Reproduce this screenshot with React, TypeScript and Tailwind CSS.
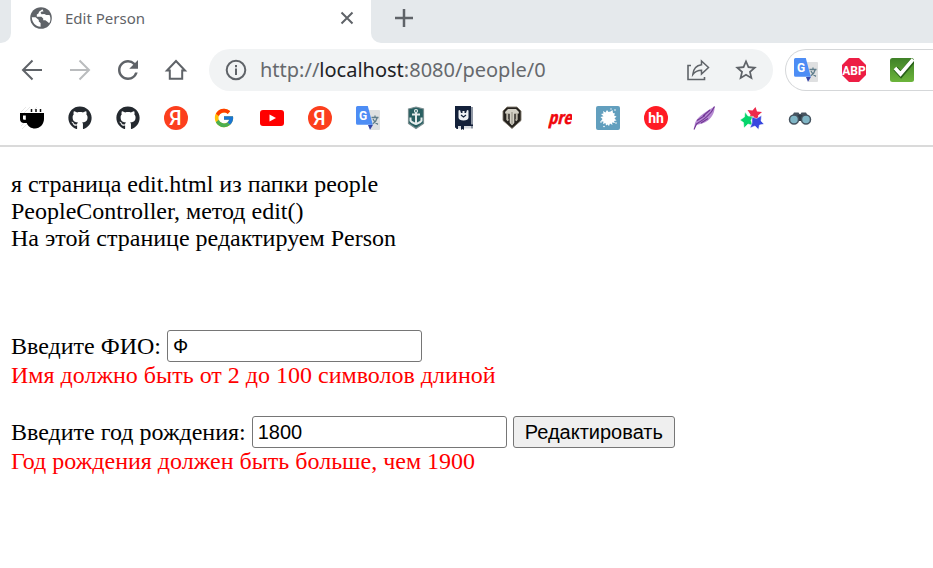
import type { ReactNode } from "react";
import { FaGithub } from "react-icons/fa";
import { FcGoogle } from "react-icons/fc";
import { MdRefresh, MdStarBorder } from "react-icons/md";

type IconProps = { children: ReactNode };

function Icon({ children }: IconProps) {
  return (
    <svg viewBox="0 0 24 24" className="size-6 shrink-0" fill="none" aria-hidden="true">
      {children}
    </svg>
  );
}

const sans = "font-['Noto_Sans',sans-serif]";
const roboto = "font-['Roboto',sans-serif]";

function Globe() {
  return (
    <Icon>
      <circle cx="12" cy="12" r="10.8" fill="#5f6368" />
      <path
        d="M13.5 3.2 10.3 5.6c-.6.5-.3 1.5-1.2 2.2l-1.3.8v2.2h4.6l1.8 1.6v1.9h2.2l2 1.4 1.8 1.6c1.7-2.6 1.6-5.6.3-8.2h-3.2l-2-1.2-2.7.3-1.1-1.4 1.2-1.2h1.8z"
        fill="#fff"
      />
      <path d="M2.8 11.2h3.8l3.2 2.8v1.5l1.8 1.4v3.9c-4.9-.3-8.6-4.3-8.8-9.6Z" fill="#fff" />
    </Icon>
  );
}

function Yandex() {
  return (
    <Icon>
      <circle cx="12" cy="12" r="12" fill="#fc3f1d" />
      <text x="11.5" y="19" textAnchor="middle" fontSize="20" fontWeight="500" fill="#fff" className={roboto}>
        Я
      </text>
    </Icon>
  );
}

function Translate() {
  return (
    <Icon>
      <path d="M9 4h14a1 1 0 0 1 1 1v18a1 1 0 0 1-1 1h-8Z" fill="#dfe0e1" />
      <path d="m12 19 5-.2L14 24Z" fill="#3646a8" />
      <path d="M1.5 0h10.3l5 18.8H1.5A1.5 1.5 0 0 1 0 17.3V1.5A1.5 1.5 0 0 1 1.5 0Z" fill="#4d8df5" />
      <path d="M15.5 11.5h7M19 9.500v2M21.300 11.500c-.7 3-2.500 5-4.500 6.300M17 13c1 2.500 2.800 4.300 5 5.300" stroke="#607d8b" strokeWidth="1.3" />
      <text x="7" y="14" textAnchor="middle" fontSize="12" fontWeight="700" fill="#fff" className={roboto}>
        G
      </text>
    </Icon>
  );
}

function Coffee() {
  return (
    <Icon>
      <path d="m1 6 5-5M1 10l9-9M2 23l5-5M14 4l3-3M1 20l3-3" stroke="#ddd" strokeWidth=".7" />
      <path d="M11.500 3v3M16 3v3M20.500 3v3" stroke="#111" strokeWidth="1.5" />
      <path d="M0 7h24v6c0 5-4 9.500-9 9.500-4 0-7-2.200-8.300-5.500H4C1.500 17 0 15.500 0 13Z" fill="#000" />
      <path d="M3 9.500h2.800v4.300H4.200c-.8 0-1.200-.5-1.200-1.300Z" fill="#fff" />
    </Icon>
  );
}

function YouTube() {
  return (
    <Icon>
      <rect y="4" width="24" height="16" rx="3" fill="#f00" />
      <path d="m9.500 8.500 6.500 3.500-6.500 3.500Z" fill="#fff" />
    </Icon>
  );
}

function Warships() {
  return (
    <Icon>
      <path d="M4.500 3 12 1l7.500 2v14.500L12 22.500 4.500 17.500Z" fill="#285f61" stroke="#7b8f91" strokeWidth="1.2" />
      <circle cx="12" cy="5" r="1.5" stroke="#e5ecec" strokeWidth="1.2" />
      <path d="M12 6.500V18M8 8.500h8M6.500 11.500v3.300c1 1.800 3 2.200 5.500 3.200 2.500-1 4.500-1.400 5.500-3.200v-3.300" stroke="#e5ecec" strokeWidth="2" />
    </Icon>
  );
}

function Book() {
  return (
    <Icon>
      <path d="M3 0h16v19H6v4H5l-2-2Z" fill="#14213a" />
      <path d="M19 1h2v21.500h-2Z" fill="#8f97a4" />
      <path d="M6 20h13v2.500H6Z" fill="#d5d9df" />
      <path d="M3 18.500h18V20H6v3H5l-2-2Z" fill="#14213a" />
      <path d="M9 20h3v4l-1.500-1L9 24Z" fill="#14213a" />
      <path d="M6.500 4.500 8 4l1 3h1.500V5h2v2H14l1-3 1.500.5v7c0 2-2 3-5 3s-5-1-5-3Z" fill="#eef1f4" />
      <path d="m9 9 2.500 2L14 9" stroke="#14213a" strokeWidth="1.2" />
    </Icon>
  );
}

function Tanks() {
  return (
    <Icon>
      <path d="M7 1h10l4 4v9.500L12 22.500 3 14.500V5Z" fill="#25221e" stroke="#817b6e" strokeWidth=".9" />
      <path d="M8 3h8l3 3-.5 1.800h-4.200V17L12 19.500 9.700 17V7.800H5.500L5 6Z" fill="#d3d0c5" />
      <path d="M7.300 7v6.500l1 1.200M16.700 7v6.500l-1 1.200" stroke="#bcb7aa" strokeWidth="2" />
      <path d="M12 6v12" stroke="#817b6e" strokeWidth=".8" />
    </Icon>
  );
}

function Pre() {
  return (
    <Icon>
      <text
        x="12"
        y="18"
        textAnchor="middle"
        fontSize="18"
        fontWeight="700"
        fontStyle="italic"
        fill="#f0060c"
        stroke="#f0060c"
        strokeWidth=".4"
        className="font-['Open_Sans_Condensed','Roboto_Condensed','Lato',sans-serif]"
      >
        pre
      </text>
    </Icon>
  );
}

function Splash() {
  return (
    <Icon>
      <rect width="24" height="24" rx="2" fill="#629fbe" />
      <path
        d="m7 5 2.500 1.500L11 4l1.500 2 2-.5L16.500 4l.5 3 2 .5-1 2 2.500 1-2 2 2 2-2.500.5L19 17l-3-.5.500 2.500-2.500-1.500-1 2.500-1.500-1.500L10 19.500 9.500 17 7 18l.5-2.500-3 0L6.500 13 4.500 11l3-.7L5 8l2.500-.5Z"
        fill="#fff"
      />
      <g fill="#fff">
        <circle cx="8" cy="20.500" r=".8" />
        <circle cx="19" cy="4" r=".8" />
        <circle cx="15" cy="3" r=".7" />
        <circle cx="5" cy="16" r=".8" />
        <circle cx="20" cy="17" r=".8" />
      </g>
    </Icon>
  );
}

function HeadHunter() {
  return (
    <Icon>
      <circle cx="12" cy="12" r="12" fill="#ff1c24" />
      <text x="12" y="17" textAnchor="middle" fontSize="14" fontWeight="700" fill="#fff" className={roboto}>
        hh
      </text>
    </Icon>
  );
}

function Feather() {
  return (
    <Icon>
      <path d="M22.500.5c.5 5-2 10.500-6.500 14-3.500 2.800-8 3.500-11.500 4.500L2 23l1-6C5.500 10.500 15 5 22.500.5Z" fill="#b68ad2" />
      <path d="M22.500.5C19 9 11 14 4.500 18L2 23.500M5 14.500l8-5M9 17l7-4.500M18 4l-7 6" stroke="#713794" strokeWidth="1.1" />
    </Icon>
  );
}

function Stars() {
  return (
    <Icon>
      <path d="m7.500 4 5 .5 3-3.500 1.500 4.500 5 .5-4 3.500.5 5-4.500-2.500L9 13l1.500-4.500Z" fill="#ed294a" />
      <path d="m5 6 3 4 5.500.5-2.500 4 2 5-5-1.500L4 22l-.5-5.500L0 14l4.500-3Z" fill="#06d56b" stroke="#fff" strokeWidth=".5" />
      <path d="m12 11 4.500 1.500 5-3-.5 5.500 3 3-4.500 1-1 4.500-3.500-3.500-5 2 2-5Z" fill="#3747df" stroke="#fff" strokeWidth=".5" />
    </Icon>
  );
}

function Binoculars() {
  return (
    <Icon>
      <path d="M6 6.500h4.500l1 1.500h1l1-1.500H18l4 7H2Z" fill="#46535f" />
      <rect x="9.500" y="9" width="5" height="6" fill="#303d49" />
      <circle cx="6" cy="13.500" r="4.500" fill="#7fb5c5" stroke="#46535f" strokeWidth="1.500" />
      <circle cx="18" cy="13.500" r="4.500" fill="#7fb5c5" stroke="#46535f" strokeWidth="1.500" />
    </Icon>
  );
}

function AdBlock() {
  return (
    <Icon>
      <path d="M7 0h10l7 7v10l-7 7H7l-7-7V7Z" fill="#ed1e45" />
      <text x="12" y="16.500" textAnchor="middle" fontSize="12" fontWeight="700" fill="#fff" className={roboto}>
        ABP
      </text>
    </Icon>
  );
}

function GreenCheck() {
  return (
    <Icon>
      <defs>
        <linearGradient id="leaf" x1="0" y1="0" x2="0" y2="1">
          <stop stopColor="#3f8128" />
          <stop offset="1" stopColor="#6cb53b" />
        </linearGradient>
      </defs>
      <rect width="24" height="24" rx="2.500" fill="url(#leaf)" />
      <path d="m5.500 10.500 5.500 6L23 2.500" stroke="#286019" strokeWidth="5.500" />
      <path d="m5 10 5.500 6L23 1.500" stroke="#fff" strokeWidth="3.500" />
    </Icon>
  );
}

const bookmarks: { name: string; icon: ReactNode }[] = [
  { name: "Coffee", icon: <Coffee /> },
  { name: "GitHub", icon: <FaGithub className="size-6 shrink-0 text-[#24292f]" /> },
  { name: "GitHub repositories", icon: <FaGithub className="size-6 shrink-0 text-[#24292f]" /> },
  { name: "Yandex", icon: <Yandex /> },
  { name: "Google", icon: <FcGoogle className="size-[22px] shrink-0" /> },
  { name: "YouTube", icon: <YouTube /> },
  { name: "Yandex search", icon: <Yandex /> },
  { name: "Translate", icon: <Translate /> },
  { name: "Warships", icon: <Warships /> },
  { name: "Book", icon: <Book /> },
  { name: "Tanks", icon: <Tanks /> },
  { name: "Pre", icon: <Pre /> },
  { name: "Splash", icon: <Splash /> },
  { name: "HeadHunter", icon: <HeadHunter /> },
  { name: "Feather", icon: <Feather /> },
  { name: "Stars", icon: <Stars /> },
  { name: "Binoculars", icon: <Binoculars /> },
];

const iconButton = "flex size-6 shrink-0 items-center justify-center text-[#5f6368]";

const textBox =
  "h-8 w-[255px] rounded-[3px] border border-[#767676] px-[5px] font-['Liberation_Sans',sans-serif] text-[20px]";

function TabStrip() {
  return (
    <div className="flex h-[43px] bg-white">
      <div className="w-[11px] shrink-0 rounded-br-[10px] bg-[#e5e9ec]" />
      <div className="flex w-[360px] shrink-0 items-center pr-3 pb-[7px] pl-[18px]">
        <Globe />
        <span className={`ml-3 flex-1 text-[15px] text-[#5f6368] ${sans}`}>Edit Person</span>
        <button type="button" aria-label="Close tab" className={iconButton}>
          <Icon>
            <path d="m6.500 6.500 11 11m0-11-11 11" stroke="currentColor" strokeWidth="2" />
          </Icon>
        </button>
      </div>
      <div className="flex flex-1 items-center rounded-bl-[10px] bg-[#e5e9ec] pb-[7px] pl-[21px]">
        <button type="button" aria-label="New tab" className={iconButton}>
          <Icon>
            <path d="M12 3v18M3 12h18" stroke="currentColor" strokeWidth="2.500" />
          </Icon>
        </button>
      </div>
    </div>
  );
}

function Toolbar() {
  return (
    <div className="flex items-center overflow-hidden pt-[6px] pl-5">
      <nav className="mr-[21px] flex gap-6">
        <button type="button" aria-label="Back" className={iconButton}>
          <Icon>
            <path d="M22 12H3.500M12.500 2.500 3 12l9.500 9.500" stroke="currentColor" strokeWidth="2" />
          </Icon>
        </button>
        <button type="button" aria-label="Forward" className="flex size-6 shrink-0 items-center justify-center text-[#babcbe]">
          <Icon>
            <path d="M2 12h18.500M11.500 2.500 21 12l-9.500 9.500" stroke="currentColor" strokeWidth="2" />
          </Icon>
        </button>
        <button type="button" aria-label="Reload" className={iconButton}>
          <MdRefresh className="size-[30px] shrink-0" />
        </button>
        <button type="button" aria-label="Home" className={iconButton}>
          <Icon>
            <path d="M3 12.500 12 3l9 9.500h-2.800v8.300H5.800v-8.300Z" stroke="currentColor" strokeWidth="2" />
          </Icon>
        </button>
      </nav>
      <div className="flex h-[42px] min-w-0 flex-1 items-center rounded-full bg-[#f1f3f4] px-[15px]">
        <button type="button" aria-label="Site information" className={iconButton}>
          <Icon>
            <circle cx="12" cy="12" r="9.300" stroke="currentColor" strokeWidth="2" />
            <path d="M12 10.500V17M12 7v2.200" stroke="currentColor" strokeWidth="2" />
          </Icon>
        </button>
        <div className="ml-3 flex-1 text-[20px] whitespace-nowrap text-[#66696d]">
          http://<span className="text-[#202124]">localhost</span>:8080/people/0
        </div>
        <button type="button" aria-label="Share" className={iconButton}>
          <Icon>
            <path d="M5 7.500H2v14h16.500V19" stroke="currentColor" strokeWidth="1.600" />
            <path d="M15.500 3 22.500 9.500l-7 6.500v-3.700c-4 0-6.500 1.200-8.700 4.200.5-5.300 3.400-9 8.700-9.700Z" stroke="currentColor" strokeWidth="1.500" />
          </Icon>
        </button>
        <button type="button" aria-label="Bookmark this page" className="ml-6 flex size-6 shrink-0 items-center justify-center text-[#5f6368]">
          <MdStarBorder className="size-[26px] shrink-0" />
        </button>
      </div>
      <div className="ml-3 flex h-[42px] w-[148px] shrink-0 items-center gap-6 rounded-l-full border border-r-0 border-[#d5d7d9] pl-2">
        <button type="button" aria-label="Translate page" className={iconButton}>
          <Translate />
        </button>
        <button type="button" aria-label="Ad blocker" className={iconButton}>
          <AdBlock />
        </button>
        <button type="button" aria-label="Site check" className={iconButton}>
          <GreenCheck />
        </button>
      </div>
    </div>
  );
}

export default function App() {
  return (
    <div className="min-h-screen bg-white">
      <header className="border-b-2 border-[#dadada] font-['Noto_Sans',sans-serif]">
        <TabStrip />
        <Toolbar />
        <nav className="flex gap-6 overflow-hidden py-[15px] pl-5">
          {bookmarks.map((b) => (
            <a key={b.name} href="#" aria-label={b.name} className={iconButton}>
              {b.icon}
            </a>
          ))}
        </nav>
      </header>
      <main className="px-[11px] pt-6 font-['Liberation_Serif',serif] text-[24px] leading-[27px] text-black">
        <p>
          я страница edit.html из папки people
          <br />
          PeopleController, метод edit()
          <br />
          На этой странице редактируем Person
        </p>
        <form className="mt-[78px]" onSubmit={(e) => e.preventDefault()}>
          <div className="flex items-center gap-[6px]">
            <label htmlFor="name">Введите ФИО:</label>
            <input id="name" type="text" defaultValue="Ф" className={textBox} />
          </div>
          <p className="text-[#ff0000]">Имя должно быть от 2 до 100 символов длиной</p>
          <div className="mt-[27px] flex items-center gap-[6px]">
            <label htmlFor="year">Введите год рождения:</label>
            <input id="year" type="text" defaultValue="1800" className={textBox} />
            <button
              type="submit"
              className="h-8 rounded-[3px] border border-[#767676] bg-[#efefef] px-[11px] font-['Liberation_Sans',sans-serif] text-[20px]"
            >
              Редактировать
            </button>
          </div>
          <p className="text-[#ff0000]">Год рождения должен быть больше, чем 1900</p>
        </form>
      </main>
    </div>
  );
}
